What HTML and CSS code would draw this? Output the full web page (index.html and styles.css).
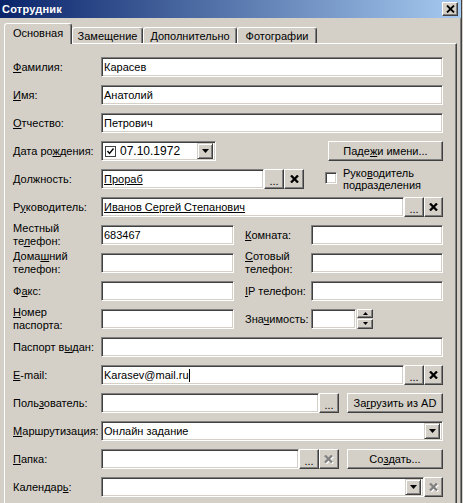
FILE: index.html
```html
<!DOCTYPE html>
<html lang="ru">
<head>
<meta charset="utf-8">
<title>Сотрудник</title>
<link rel="stylesheet" href="styles.css">
</head>
<body>
<div class="window">
  <div class="titlebar">
    <span class="title">Сотрудник</span>
    <div class="close-btn"><svg width="9" height="8" viewBox="0 0 9 8"><path d="M1 0.5 L8 7.5 M8 0.5 L1 7.5" stroke="#000" stroke-width="1.8" fill="none"/></svg></div>
  </div>
  <div class="tabs">
    <div class="tab active t1">Основная</div>
    <div class="tab t2">Замещение</div>
    <div class="tab t3">Дополнительно</div>
    <div class="tab t4">Фотографии</div>
  </div>
  <div class="panel">
    <div class="row">
      <div class="lbl"><u>Ф</u>амилия:</div>
      <div class="field w-full">Карасев</div>
    </div>
    <div class="row">
      <div class="lbl"><u>И</u>мя:</div>
      <div class="field w-full">Анатолий</div>
    </div>
    <div class="row">
      <div class="lbl"><u>О</u>тчество:</div>
      <div class="field w-full">Петрович</div>
    </div>
    <div class="row">
      <div class="lbl">Дата ро<u>ж</u>дения:</div>
      <div class="field date">
        <svg class="chk" width="11" height="11" viewBox="0 0 11 11"><rect x="0.5" y="0.5" width="10" height="10" fill="#fff" stroke="#404040"/><path d="M2.5 5 L4.5 7.5 L8.5 2.5" stroke="#000" stroke-width="1.4" fill="none"/></svg>
        <span class="date-text">07.10.1972</span>
        <div class="dd-btn"><svg width="7" height="4" viewBox="0 0 7 4"><polygon points="0,0 7,0 3.5,4" fill="#000"/></svg></div>
      </div>
      <div class="btn btn-wide push">Паде<u>ж</u>и имени...</div>
    </div>
    <div class="row">
      <div class="lbl"><u>Д</u>олжность:</div>
      <div class="field w-post"><span class="link">Прораб</span></div>
      <div class="btn sq">...</div>
      <div class="btn sq"><svg width="9" height="8" viewBox="0 0 9 8"><path d="M1 0.5 L8 7.5 M8 0.5 L1 7.5" stroke="#000" stroke-width="2.3" fill="none"/></svg></div>
      <div class="cbox"></div>
      <div class="cbox-lbl">Руко<u>в</u>одитель<br>подразделения</div>
    </div>
    <div class="row">
      <div class="lbl">Р<u>у</u>ководитель:</div>
      <div class="field w-long"><span class="link">Иванов Сергей Степанович</span></div>
      <div class="btn sq">...</div>
      <div class="btn sq sq19"><svg width="9" height="8" viewBox="0 0 9 8"><path d="M1 0.5 L8 7.5 M8 0.5 L1 7.5" stroke="#000" stroke-width="2.3" fill="none"/></svg></div>
    </div>
    <div class="row">
      <div class="lbl two">Местный<br>те<u>л</u>ефон:</div>
      <div class="field w-half">683467</div>
      <div class="lbl-r"><u>К</u>омната:</div>
      <div class="field w-right"></div>
    </div>
    <div class="row">
      <div class="lbl two">Дома<u>ш</u>ний<br>телефон:</div>
      <div class="field w-half"></div>
      <div class="lbl-r two"><u>С</u>отовый<br>телефон:</div>
      <div class="field w-right"></div>
    </div>
    <div class="row">
      <div class="lbl">Ф<u>а</u>кс:</div>
      <div class="field w-half"></div>
      <div class="lbl-r"><u>I</u>P телефон:</div>
      <div class="field w-right"></div>
    </div>
    <div class="row">
      <div class="lbl two"><u>Н</u>омер<br>паспорта:</div>
      <div class="field w-half"></div>
      <div class="lbl-r">Зна<u>ч</u>имость:</div>
      <div class="field w-num"></div>
      <div class="spin">
        <div class="spin-btn"><svg width="5" height="3" viewBox="0 0 5 3"><polygon points="0,3 5,3 2.5,0" fill="#000"/></svg></div>
        <div class="spin-btn"><svg width="5" height="3" viewBox="0 0 5 3"><polygon points="0,0 5,0 2.5,3" fill="#000"/></svg></div>
      </div>
    </div>
    <div class="row">
      <div class="lbl">Паспорт в<u>ы</u>дан:</div>
      <div class="field w-full"></div>
    </div>
    <div class="row">
      <div class="lbl"><u>E</u>-mail:</div>
      <div class="field w-long">Karasev@mail.ru<span class="caret"></span></div>
      <div class="btn sq">...</div>
      <div class="btn sq sq19"><svg width="9" height="8" viewBox="0 0 9 8"><path d="M1 0.5 L8 7.5 M8 0.5 L1 7.5" stroke="#000" stroke-width="2.3" fill="none"/></svg></div>
    </div>
    <div class="row">
      <div class="lbl">Поль<u>з</u>ователь:</div>
      <div class="field w-user"></div>
      <div class="btn sq">...</div>
      <div class="btn btn-ad push">За<u>г</u>рузить из AD</div>
    </div>
    <div class="row">
      <div class="lbl"><u>М</u>аршрутизация:</div>
      <div class="field w-full combo">
        <span>Онлайн задание</span>
        <div class="dd-btn"><svg width="7" height="4" viewBox="0 0 7 4"><polygon points="0,0 7,0 3.5,4" fill="#000"/></svg></div>
      </div>
    </div>
    <div class="row">
      <div class="lbl"><u>П</u>апка:</div>
      <div class="field w-folder"></div>
      <div class="btn sq">...</div>
      <div class="btn sq disabled"><svg width="10" height="9" viewBox="0 0 10 9"><path d="M2 1.5 L9 8.5 M9 1.5 L2 8.5" stroke="#fff" stroke-width="2.3" fill="none"/><path d="M1 0.5 L8 7.5 M8 0.5 L1 7.5" stroke="#808080" stroke-width="2.3" fill="none"/></svg></div>
      <div class="btn btn-ad push">Со<u>з</u>дать...</div>
    </div>
    <div class="row">
      <div class="lbl">Календар<u>ь</u>:</div>
      <div class="field w-cal combo">
        <span></span>
        <div class="dd-btn"><svg width="7" height="4" viewBox="0 0 7 4"><polygon points="0,0 7,0 3.5,4" fill="#000"/></svg></div>
      </div>
      <div class="btn sq sq19 disabled"><svg width="10" height="9" viewBox="0 0 10 9"><path d="M2 1.5 L9 8.5 M9 1.5 L2 8.5" stroke="#fff" stroke-width="2.3" fill="none"/><path d="M1 0.5 L8 7.5 M8 0.5 L1 7.5" stroke="#808080" stroke-width="2.3" fill="none"/></svg></div>
    </div>
  </div>
</div>
</body>
</html>
```

FILE: styles.css
```css
* { box-sizing: border-box; }
html, body { margin: 0; padding: 0; }
body {
  width: 463px;
  height: 503px;
  overflow: hidden;
  background: #d4d0c8;
  font-family: "Liberation Sans", Arial, sans-serif;
  font-size: 11px;
  color: #000;
}
u { text-decoration: underline; text-underline-offset: 1px; }

.window {
  width: 462px;
  height: 503px;
  background: #d4d0c8;
  border-right: 1px solid #404040;
  box-shadow: inset -1px 0 #808080;
  overflow: hidden;
}

.titlebar {
  height: 18px;
  background: linear-gradient(to right, #0a246a, #a6caf0);
  display: flex;
  align-items: center;
  padding: 0 3px 0 2px;
}
.title {
  color: #fff;
  font-weight: bold;
  font-size: 11px;
  letter-spacing: 0.2px;
}
.close-btn {
  margin-left: auto;
  width: 16px;
  height: 14px;
  background: #d4d0c8;
  border: 1px solid;
  border-color: #fff #404040 #404040 #fff;
  box-shadow: inset -1px -1px #808080;
  display: flex;
  align-items: center;
  justify-content: center;
}

.tabs {
  display: flex;
  align-items: flex-end;
  height: 25px;
  padding-left: 4px;
}
.tab {
  height: 16px;
  border: 1px solid;
  border-bottom: none;
  border-color: #fff #404040 transparent #fff;
  box-shadow: inset -1px 0 #808080;
  border-radius: 3px 3px 0 0;
  text-align: center;
  line-height: 13px;
  padding-top: 2px;
  white-space: nowrap;
}
.tab.active {
  height: 21px;
  margin-bottom: -1px;
  position: relative;
  z-index: 1;
  background: #d4d0c8;
  padding-top: 3px;
}
.t1 { width: 68px; }
.t2 { width: 71px; }
.t3 { width: 94px; }
.t4 { width: 80px; }

.panel {
  margin-left: 4px;
  width: 453px;
  height: 460px;
  border-top: 1px solid #fff;
  border-left: 1px solid #fff;
  border-right: 1px solid #404040;
  box-shadow: inset -1px 0 #808080;
  padding: 13px 12px 0 8px;
  display: flex;
  flex-direction: column;
  gap: 8px;
}

.row {
  display: flex;
  align-items: center;
  height: 20px;
  width: 430px;
}
.lbl {
  width: 88px;
  flex: none;
  line-height: 13px;
  white-space: nowrap;
}
.lbl-r {
  width: 66px;
  margin-left: 11px;
  flex: none;
  line-height: 13px;
  white-space: nowrap;
}

.field {
  height: 20px;
  flex: none;
  background: #fff;
  border: 1px solid;
  border-color: #808080 #fff #fff #808080;
  box-shadow: inset 1px 1px #404040, inset -1px -1px #d4d0c8;
  padding: 0 2px;
  display: flex;
  align-items: center;
  white-space: nowrap;
  overflow: hidden;
}
.w-full { width: 342px; }
.w-long { width: 303px; }
.w-post { width: 163px; }
.w-half { width: 133px; }
.w-right { width: 132px; }
.w-num { width: 45px; }
.w-user { width: 218px; }
.w-folder { width: 198px; }
.w-cal { width: 323px; }

.link { text-decoration: underline; }
.caret {
  display: inline-block;
  width: 1px;
  height: 13px;
  background: #000;
  margin-left: 0;
}

.date {
  width: 115px;
  padding-left: 3px;
}
.chk { flex: none; }
.date-text { margin-left: 4px; font-size: 12px; }

.combo { justify-content: space-between; padding-right: 2px; }
.dd-btn {
  width: 16px;
  height: 16px;
  flex: none;
  margin-left: auto;
  background: #d4d0c8;
  border: 1px solid;
  border-color: #d4d0c8 #404040 #404040 #d4d0c8;
  box-shadow: inset 1px 1px #fff, inset -1px -1px #808080;
  display: flex;
  align-items: center;
  justify-content: center;
}

.btn {
  height: 20px;
  flex: none;
  background: #d4d0c8;
  border: 1px solid;
  border-color: #fff #404040 #404040 #fff;
  box-shadow: inset -1px -1px #808080;
  display: flex;
  align-items: center;
  justify-content: center;
  white-space: nowrap;
}
.sq { width: 20px; padding-top: 3px; }
.sq svg { margin-top: -3px; }
.sq19 { width: 19px; }
.btn-wide { width: 115px; }
.btn-ad { width: 96px; }
.push { margin-left: auto; }

.cbox {
  width: 12px;
  height: 12px;
  flex: none;
  margin-left: 21px;
  margin-top: -2px;
  background: #fff;
  border: 1px solid;
  border-color: #808080 #fff #fff #808080;
  box-shadow: inset 1px 1px #404040, inset -1px -1px #d4d0c8;
}
.cbox-lbl {
  margin-left: 6px;
  line-height: 12px;
  white-space: nowrap;
}

.spin {
  margin-left: 1px;
  display: flex;
  flex-direction: column;
  width: 16px;
  height: 21px;
  flex: none;
}
.spin-btn {
  height: 10px;
  margin-bottom: 1px;
  background: #d4d0c8;
  border: 1px solid;
  border-color: #fff #404040 #404040 #fff;
  box-shadow: inset -1px -1px #808080;
  display: flex;
  align-items: center;
  justify-content: center;
}
```
